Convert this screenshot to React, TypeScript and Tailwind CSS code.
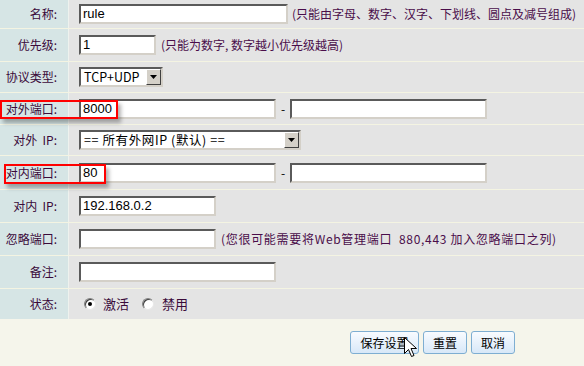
import type { ReactNode } from 'react';

const font = "font-['Noto_Sans_CJK_SC','Noto_Sans',sans-serif]";

function Row({ label, h, last, children }: { label: string; h: string; last?: boolean; children: ReactNode }) {
    return (
        <div className={`flex ${h} ${last ? '' : 'border-b border-[#f4f4e2]'}`}>
            <div className="w-[69px] shrink-0 bg-[#d6e5e5] border-r border-[#eef2ee] flex items-center justify-end pr-[11px] text-[12px] text-[#3a0a3a] whitespace-pre">
                {label}
            </div>
            <div className="flex-1 bg-[#e4e4e4] flex items-center pl-[10px] text-[12px] text-[#4a0d4a]">
                {children}
            </div>
        </div>
    );
}

function TextBox({ w, value }: { w: string; value?: string }) {
    return (
        <div className={`${w} h-[20px] bg-white border-2 border-t-[#5a5a5a] border-l-[#5a5a5a] border-b-[#d4d0c8] border-r-[#d4d0c8] flex items-center pl-[2px] text-[13px] text-black font-['Liberation_Sans',sans-serif]`}>
            {value}
        </div>
    );
}

function Select({ w, value, wide }: { w: string; value: string; wide?: boolean }) {
    return (
        <div className={`${w} h-[20px] bg-white border-2 border-t-[#5a5a5a] border-l-[#5a5a5a] border-b-[#d4d0c8] border-r-[#d4d0c8] flex items-center text-black`}>
            <span className={`flex-1 pl-[3px] text-[12.5px] whitespace-pre ${wide ? 'tracking-[0.6px]' : ''}`}>{value}</span>
            <div className="w-[15px] h-[16px] bg-[#d4d0c8] border border-t-white border-l-white border-b-[#404040] border-r-[#404040] flex items-center justify-center">
                <svg width="7" height="4" viewBox="0 0 7 4"><path d="M0 0h7L3.5 4z" fill="#000" /></svg>
            </div>
        </div>
    );
}

function Radio({ checked }: { checked?: boolean }) {
    return (
        <div className="w-[12px] h-[12px] rounded-full bg-white border border-t-[#808080] border-l-[#808080] border-b-[#e8e8e8] border-r-[#e8e8e8] shadow-[inset_1px_1px_0_#404040] flex items-center justify-center">
            {checked && <div className="w-[4px] h-[4px] rounded-full bg-black" />}
        </div>
    );
}

function Btn({ w, children }: { w: string; children: ReactNode }) {
    return (
        <div className={`${w} h-[23px] rounded-[3px] border border-[#7eaed2] bg-gradient-to-b from-[#f8fbff] to-[#d8e8f8] flex items-center justify-center text-[12px] text-black`}>
            {children}
        </div>
    );
}

export default function App() {
    return (
        <div className={`relative w-[584px] h-[366px] bg-[#f5f5eb] overflow-hidden ${font}`}>
            <Row label="名称:" h="h-[29px]">
                <TextBox w="w-[209px]" value="rule" />
                <span className="ml-[4px] whitespace-nowrap">(只能由字母、数字、汉字、下划线、圆点及减号组成)</span>
            </Row>
            <Row label="优先级:" h="h-[33px]">
                <TextBox w="w-[77px]" value="1" />
                <span className="ml-[5px] whitespace-nowrap">(只能为数字, 数字越小优先级越高)</span>
            </Row>
            <Row label="协议类型:" h="h-[31px]">
                <Select w="w-[84px]" value="TCP+UDP" />
            </Row>
            <Row label="对外端口:" h="h-[32px]">
                <TextBox w="w-[197px]" value="8000" />
                <span className="mx-[5px] text-black">-</span>
                <TextBox w="w-[197px]" />
            </Row>
            <Row label="对外  IP:" h="h-[31px]">
                <Select w="w-[222px]" value="== 所有外网IP (默认) ==" wide />
            </Row>
            <Row label="对内端口:" h="h-[34px]">
                <TextBox w="w-[197px]" value="80" />
                <span className="mx-[5px] text-black">-</span>
                <TextBox w="w-[197px]" />
            </Row>
            <Row label="对内  IP:" h="h-[33px]">
                <TextBox w="w-[137px]" value="192.168.0.2" />
            </Row>
            <Row label="忽略端口:" h="h-[33px]">
                <TextBox w="w-[137px]" />
                <span className="ml-[5px] whitespace-pre tracking-[0.7px]">(您很可能需要将Web管理端口  880,443 加入忽略端口之列)</span>
            </Row>
            <Row label="备注:" h="h-[33px]">
                <TextBox w="w-[197px]" />
            </Row>
            <Row label="状态:" h="h-[30px]" last>
                <div className="flex items-center pl-[5px] text-[13px] text-[#3a0a3a]">
                    <Radio checked />
                    <span className="ml-[7px]">激活</span>
                    <span className="ml-[13px]"><Radio /></span>
                    <span className="ml-[8px]">禁用</span>
                </div>
            </Row>

            <div className="flex gap-[4px] pl-[350px] pt-[12px]">
                <Btn w="w-[69px]">保存设置</Btn>
                <Btn w="w-[44px]">重置</Btn>
                <Btn w="w-[44px]">取消</Btn>
            </div>

            {/* red highlight boxes */}
            <div className="absolute left-0 top-[100px] w-[118px] h-[19px] border-2 border-[#ff0000] shadow-[3px_4px_4px_rgba(0,0,0,0.3)]" />
            <div className="absolute left-[4px] top-[164px] w-[102px] h-[20px] border-2 border-[#ff0000] shadow-[3px_4px_4px_rgba(0,0,0,0.3)]" />

            {/* mouse pointer */}
            <svg className="absolute left-[404px] top-[337px]" width="13" height="21" viewBox="0 0 13 21">
                <path d="M0.5 0.5v16l4-4 3 7 2.5-1-3-7h5.5z" fill="#fff" stroke="#000" strokeWidth="1" />
            </svg>
        </div>
    );
}
